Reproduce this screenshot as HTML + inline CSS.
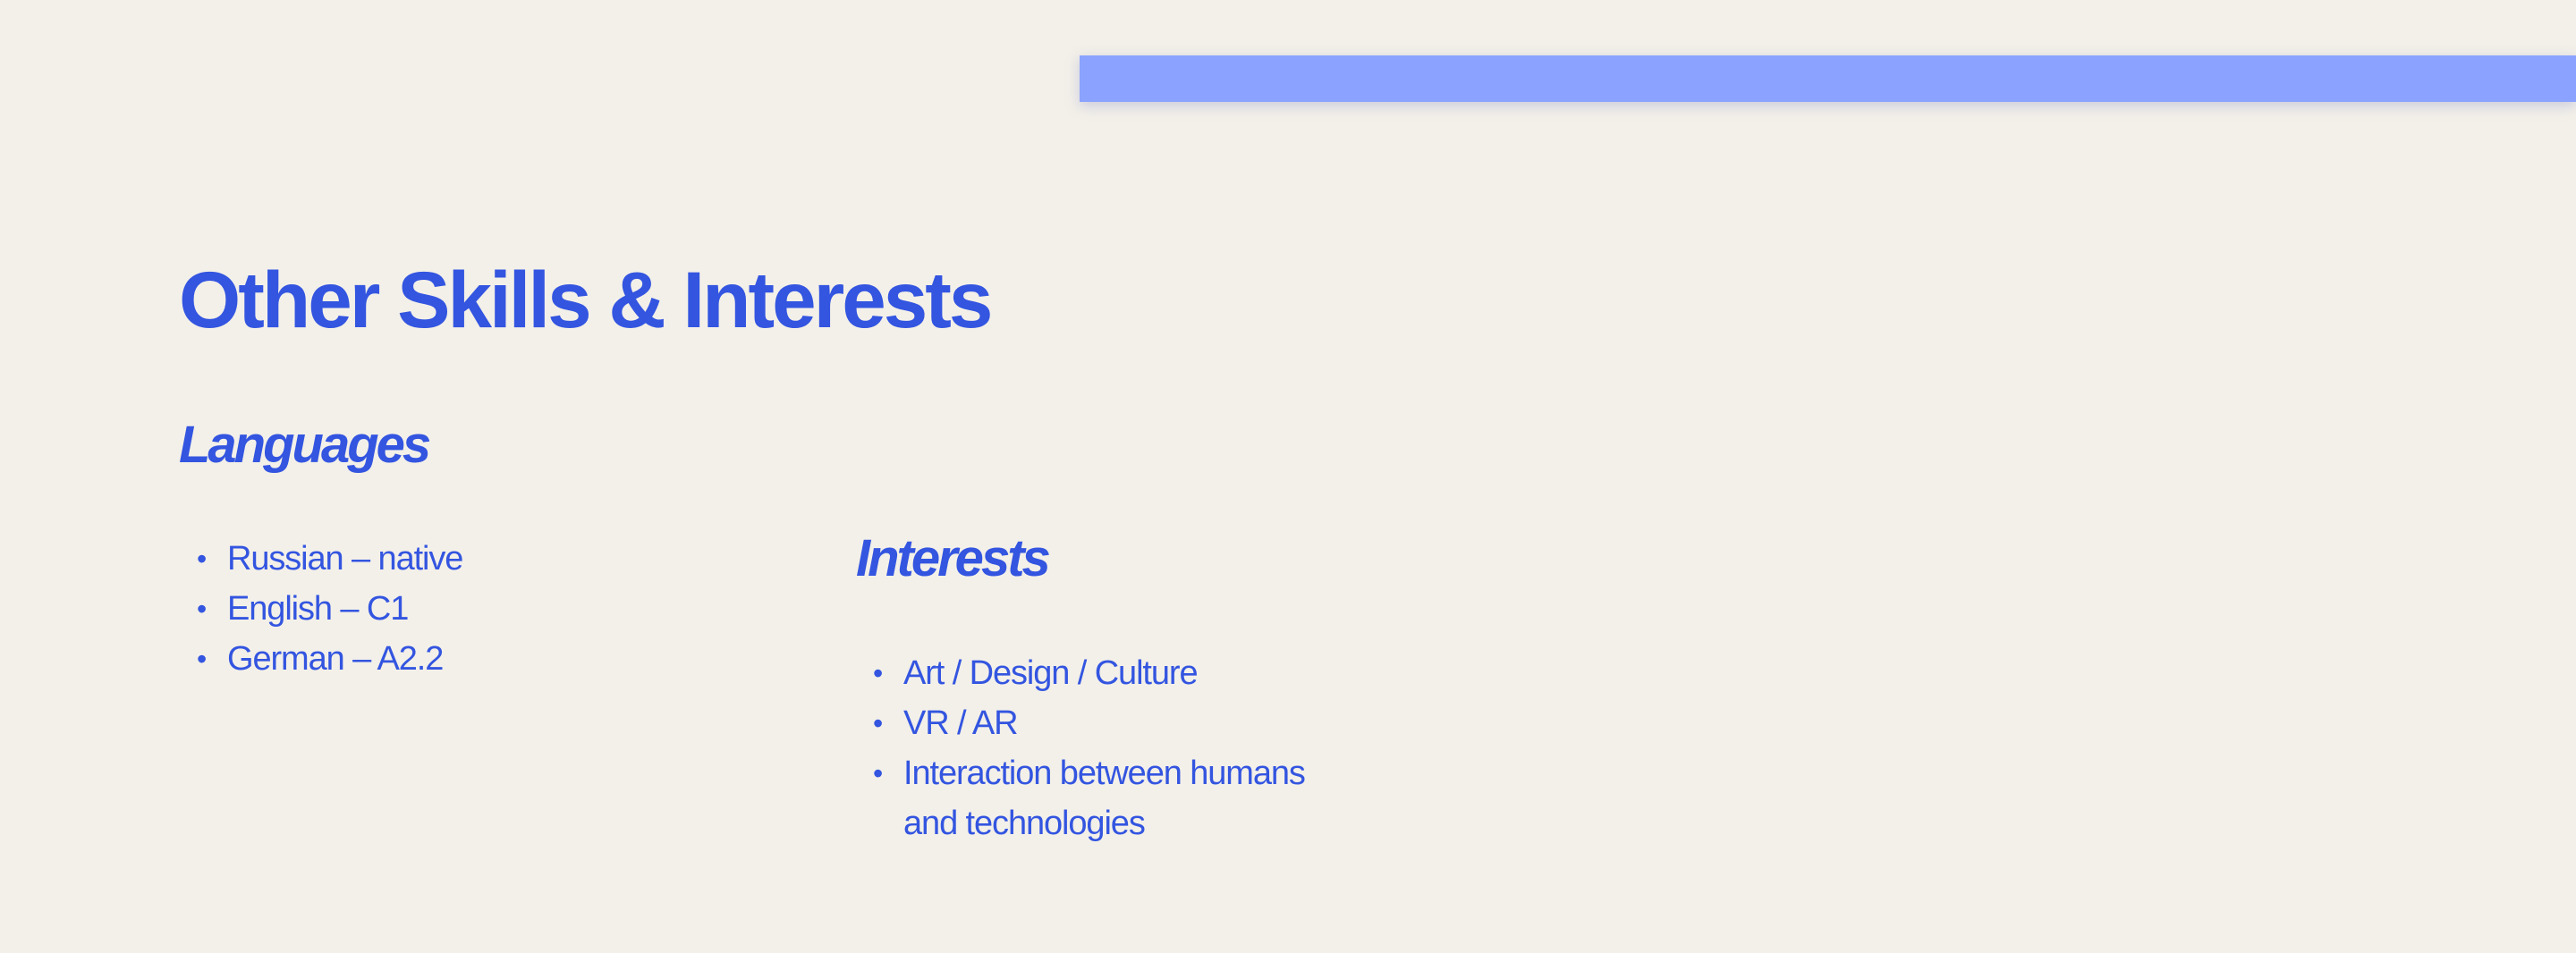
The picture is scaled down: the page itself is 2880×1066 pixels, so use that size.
<!DOCTYPE html>
<html><head><meta charset="utf-8"><style>
html,body{margin:0;padding:0;width:2880px;height:1066px;overflow:hidden;background:#f3f0e9;font-family:"Liberation Sans",sans-serif;color:#3355e0;position:relative}
.bar{position:absolute;left:1207px;top:62px;width:1673px;height:52px;background:#8ba3ff;box-shadow:0 4px 14px rgba(120,130,200,0.35)}
.h1{position:absolute;left:200px;top:291px;font-size:89px;line-height:1;font-weight:bold;letter-spacing:-3px;white-space:nowrap}
.h2{position:absolute;font-size:58px;line-height:1;font-weight:bold;font-style:italic;letter-spacing:-3px;white-space:nowrap}
.li{position:absolute;font-size:38px;line-height:56px;letter-spacing:-1.1px;white-space:nowrap}
.b{position:absolute;font-size:32px;line-height:56px}
</style></head><body>
<div class="bar"></div>
<div class="h1">Other Skills &amp; Interests</div>
<div class="h2" style="left:200px;top:469px">Languages</div>
<div class="h2" style="left:957px;top:596px">Interests</div>

<div class="b" style="left:220px;top:597px">•</div><div class="li" style="left:254px;top:597px">Russian – native</div>
<div class="b" style="left:220px;top:653px">•</div><div class="li" style="left:254px;top:653px">English – C1</div>
<div class="b" style="left:220px;top:709px">•</div><div class="li" style="left:254px;top:709px">German – A2.2</div>

<div class="b" style="left:976px;top:725px">•</div><div class="li" style="left:1010px;top:725px">Art / Design / Culture</div>
<div class="b" style="left:976px;top:781px">•</div><div class="li" style="left:1010px;top:781px">VR / AR</div>
<div class="b" style="left:976px;top:837px">•</div><div class="li" style="left:1010px;top:837px">Interaction between humans</div>
<div class="li" style="left:1010px;top:893px">and technologies</div>
</body></html>
